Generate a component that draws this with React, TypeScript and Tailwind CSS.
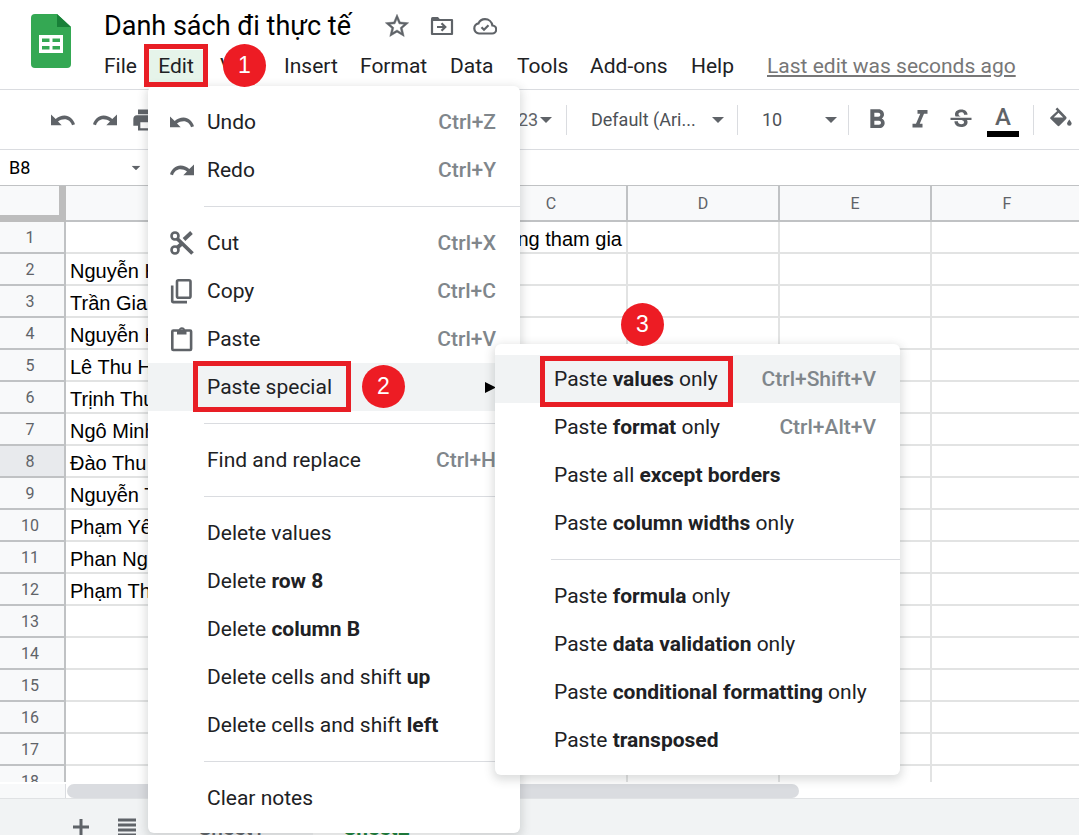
import React from 'react';
import { MdFormatBold, MdFormatItalic, MdPrint, MdStrikethroughS } from 'react-icons/md';

interface MenuEntry {
  text: string;
  bold?: string;
  after?: string;
  shortcut?: string;
  icon?: React.ReactNode;
  highlighted?: boolean;
  hasSubmenu?: boolean;
}

const Undo: React.FC<{ className?: string }> = ({ className = '' }) => (
  <svg viewBox="0 0 24 12" className={`w-6 h-3 fill-[#5f6368] ${className}`} aria-hidden="true">
    <path d="M0 .5v10.800h10.700L7 7.600C9 6 11 5.300 13.600 5.300c3.500 0 6.200 2.200 7.400 5.900l3-1C22.300 5.200 18.500 1.600 13.500 1.600 10.200 1.600 7.200 3 4.700 5.100z" />
  </svg>
);

const Redo = () => <Undo className="-scale-x-100" />;

const StarIcon = () => (
  <svg viewBox="0 0 24 24" className="w-7 h-7 fill-[#5f6368] stroke-[#5f6368]" strokeWidth="0.400" aria-hidden="true">
    <path d="M22 9.240l-7.190-.620L12 2 9.190 8.630 2 9.240l5.460 4.730L5.820 21 12 17.270 18.180 21l-1.630-7.030L22 9.240zM12 15.400l-3.760 2.270 1-4.280-3.320-2.880 4.380-.380L12 6.100l1.710 4.040 4.380.380-3.320 2.880 1 4.280L12 15.400z" />
  </svg>
);

const CutIcon = () => (
  <svg viewBox="0 0 24 24" className="w-6 h-6" fill="none" stroke="#5f6368" strokeWidth="2.600" aria-hidden="true">
    <circle cx="5" cy="5" r="3.500" />
    <circle cx="5" cy="19" r="3.500" />
    <path d="M7 7.500L22.500 22.500M7.500 16.500l5-4.500" strokeWidth="3.800" />
    <path d="M14 8.500L21.500 1.500" strokeWidth="3.800" />
  </svg>
);

const CopyIcon = () => (
  <svg viewBox="0 0 24 26" className="w-6 h-[26px]" fill="none" stroke="#5f6368" strokeWidth="2.600" aria-hidden="true">
    <rect x="7" y="2.200" width="13.500" height="17.600" rx="1.500" />
    <path d="M2.200 7.500v15.800q0 .8.800.8H17" />
  </svg>
);

const PasteIcon = () => (
  <svg viewBox="0 0 24 26" className="w-6 h-[26px]" fill="none" stroke="#5f6368" strokeWidth="2.600" aria-hidden="true">
    <rect x="2.300" y="4.500" width="18.800" height="19.500" rx="1" />
    <path d="M7 4h9.500v4.500H7z" fill="#5f6368" stroke="none" />
    <path d="M9.500 4.500a2.300 2.300 0 0 1 4.600 0" strokeWidth="1.800" />
  </svg>
);

const MoveIcon = () => (
  <svg viewBox="0 0 24 20" className="w-6 h-5" fill="none" stroke="#5f6368" strokeWidth="2.200" aria-hidden="true">
    <path d="M2 4h20v14H2z" strokeLinejoin="round" />
    <path d="M1 4V2.500Q1 1 2.500 1H8l2.500 3z" fill="#5f6368" stroke="none" />
    <path d="M7 11h8M11.500 7.200l3.800 3.800-3.800 3.800" />
  </svg>
);

const CloudIcon = () => (
  <svg viewBox="0 0 24 17" className="w-6 h-[17px]" fill="none" stroke="#5f6368" strokeWidth="2.200" aria-hidden="true">
    <path d="M6 15.500h13a4 4 0 0 0 .4-8C18.800 3.800 15.800 1.200 12 1.200c-2.900 0-5.400 1.700-6.500 4.200A5.100 5.100 0 0 0 6 15.500z" />
    <path d="M8.500 9.200l2.500 2.500 4.500-4.500" />
  </svg>
);

const FillIcon = () => (
  <svg viewBox="0 0 22 22" className="w-[22px] h-[22px] fill-[#5f6368]" aria-hidden="true">
    <path d="M5.500 2.200L7.300.5l8.800 9.300c.6.700.6 1.500 0 2.200l-6.500 6.600c-.7.700-1.500.7-2.200 0L.7 12.100c-.7-.7-.7-1.500 0-2.200l6.500-6zM8.500 5.800L3.700 10.600h9.500z" fillRule="evenodd" />
    <path d="M19.300 12.500s-2.200 2.600-2.200 4.100a2.200 2.200 0 0 0 4.500 0c0-1.500-2.300-4.100-2.300-4.100z" />
  </svg>
);

const PlusIcon = () => (
  <svg viewBox="0 0 16 16" className="w-4 h-4" stroke="#5f6368" strokeWidth="3" aria-hidden="true">
    <path d="M8 0v16M0 8h16" />
  </svg>
);

const ListIcon = () => (
  <svg viewBox="0 0 18 18" className="w-[18px] h-[18px]" stroke="#5f6368" strokeWidth="3" aria-hidden="true">
    <path d="M0 2h18M0 7h18M0 12h18M0 17h18" />
  </svg>
);

const SheetsLogo = () => (
  <svg viewBox="0 0 40 54" className="w-10 h-[54px]" aria-label="Sheets" role="img">
    <path fill="#34a853" d="M4 0h22l14 13v37a4 4 0 0 1-4 4H4a4 4 0 0 1-4-4V4a4 4 0 0 1 4-4z" />
    <path fill="#188038" d="M26 0l14 13H26z" />
    <path fill="#fff" d="M8 21h24v18H8zM11 24.500v3.500h7.500v-3.500zM21.500 24.500v3.500H29v-3.500zM11 32v3.500h7.500V32zM21.500 32v3.500H29V32z" fillRule="evenodd" />
  </svg>
);

const Caret = ({ className = '' }: { className?: string }) => (
  <svg viewBox="0 0 12 6" className={`w-3 h-[6px] fill-[#5f6368] ${className}`} aria-hidden="true">
    <path d="M0 0h12L6 6z" />
  </svg>
);

const Divider = () => <div className="w-px h-[30px] bg-[#dadce0] shrink-0" />;

const editMenu: MenuEntry[][] = [
  [
    { text: 'Undo', shortcut: 'Ctrl+Z', icon: <Undo /> },
    { text: 'Redo', shortcut: 'Ctrl+Y', icon: <Redo /> },
  ],
  [
    { text: 'Cut', shortcut: 'Ctrl+X', icon: <CutIcon /> },
    { text: 'Copy', shortcut: 'Ctrl+C', icon: <CopyIcon /> },
    { text: 'Paste', shortcut: 'Ctrl+V', icon: <PasteIcon /> },
    { text: 'Paste special', highlighted: true, hasSubmenu: true },
  ],
  [{ text: 'Find and replace', shortcut: 'Ctrl+H' }],
  [
    { text: 'Delete values' },
    { text: 'Delete ', bold: 'row 8' },
    { text: 'Delete ', bold: 'column B' },
    { text: 'Delete cells and shift ', bold: 'up' },
    { text: 'Delete cells and shift ', bold: 'left' },
  ],
  [{ text: 'Clear notes' }],
];

const pasteMenu: MenuEntry[][] = [
  [
    { text: 'Paste ', bold: 'values', after: ' only', shortcut: 'Ctrl+Shift+V', highlighted: true },
    { text: 'Paste ', bold: 'format', after: ' only', shortcut: 'Ctrl+Alt+V' },
    { text: 'Paste all ', bold: 'except borders' },
    { text: 'Paste ', bold: 'column widths', after: ' only' },
  ],
  [
    { text: 'Paste ', bold: 'formula', after: ' only' },
    { text: 'Paste ', bold: 'data validation', after: ' only' },
    { text: 'Paste ', bold: 'conditional formatting', after: ' only' },
    { text: 'Paste ', bold: 'transposed' },
  ],
];

const Menu: React.FC<{ groups: MenuEntry[][]; label: string; className: string }> = ({
  groups,
  label,
  className,
}) => (
  <div
    role="menu"
    aria-label={label}
    className={`absolute bg-white rounded-md shadow-[0_3px_10px_2px_rgba(60,64,67,0.18)] ${className}`}
  >
    {groups.map((group, index) => (
      <div key={index}>
        {index > 0 && <div className="my-3 ml-14 h-px bg-[#dadce0]" />}
        {group.map(entry => (
          <button
            key={entry.text + (entry.bold ?? '')}
            role="menuitem"
            className={`flex items-center w-full h-12 pr-6 text-left text-[21px] leading-7 whitespace-nowrap ${
              entry.highlighted ? 'bg-[#f1f3f4]' : ''
            }`}
          >
            <span className="w-[59px] pl-2 shrink-0 flex justify-center">{entry.icon}</span>
            <span className="flex-1 whitespace-pre">
              {entry.text}
              {entry.bold && <b className="font-bold">{entry.bold}</b>}
              {entry.after}
            </span>
            {entry.shortcut && <span className="font-medium text-[#80868b]">{entry.shortcut}</span>}
            {entry.hasSubmenu && (
              <svg viewBox="0 0 11 11" className="w-[11px] h-[11px]" aria-hidden="true">
                <path d="M0 0l11 5.500L0 11z" />
              </svg>
            )}
          </button>
        ))}
      </div>
    ))}
  </div>
);

const columns = ['A', 'B', 'C', 'D', 'E', 'F'];

const names: Record<number, string> = {
  2: 'Nguyễn H',
  3: 'Trần Gia',
  4: 'Nguyễn H',
  5: 'Lê Thu H',
  6: 'Trịnh Thu',
  7: 'Ngô Minh',
  8: 'Đào Thu',
  9: 'Nguyễn T',
  10: 'Phạm Yến',
  11: 'Phan Ngọc',
  12: 'Phạm Thu',
};

const Sheet = () => (
  <table className="table-fixed border-separate border-spacing-0 w-[1084px]">
    <colgroup>
      <col className="w-[66px]" />
      <col className="w-[258px]" />
      {columns.slice(1).map(column => (
        <col key={column} className="w-[152px]" />
      ))}
    </colgroup>
    <thead>
      <tr className="h-9 bg-[#f8f9fa] text-base text-[#5f6368]">
        <td className="border-r-[7px] border-b-[7px] border-[#bdbdbd]" />
        {columns.map(column => (
          <th key={column} scope="col" className="p-0 pt-[2px] font-normal border-r-2 border-b-2 border-[#c0c2c4]">
            {column}
          </th>
        ))}
      </tr>
    </thead>
    <tbody>
      {Array.from({ length: 18 }, (_, index) => index + 1).map(row => (
        <tr key={row} className="h-8">
          <th
            scope="row"
            className={`p-0 pt-[2px] pr-1 text-base leading-6 font-normal text-[#5f6368] border-r-2 border-b-2 border-[#c0c2c4] ${
              row === 8 ? 'bg-[#e8eaed]' : 'bg-[#f8f9fa]'
            }`}
          >
            {row}
          </th>
          {columns.map(column => (
            <td
              key={column}
              className="p-0 pt-1 px-1 border-r-2 border-b-2 border-[#e2e3e3] font-['Liberation_Sans',Arial,sans-serif] text-xl leading-6 text-black whitespace-nowrap overflow-hidden"
            >
              {column === 'A' && names[row]}
              {column === 'C' && row === 1 && <div className="text-right">ng tham gia</div>}
            </td>
          ))}
        </tr>
      ))}
    </tbody>
  </table>
);

const Step: React.FC<{ number: number; className: string }> = ({ number, className }) => (
  <div
    className={`absolute w-[43px] h-[43px] rounded-full bg-[#ed1c24] text-white text-[23px] flex items-center justify-center font-['Liberation_Sans',Arial,sans-serif] ${className}`}
  >
    {number}
  </div>
);

const App: React.FC = () => (
  <div className="relative h-screen flex flex-col overflow-hidden bg-white text-[#202124] font-[Roboto,sans-serif]">
    {/* Title and menu bar */}
    <header className="h-[90px] shrink-0 flex pl-[31px] border-b border-[#dadce0]">
      <div className="pt-[14px] w-[73px] shrink-0">
        <SheetsLogo />
      </div>
      <div className="flex-1 min-w-0">
        <div className="flex items-center h-[52px]">
          <h1 className="text-[27px] leading-8 text-black whitespace-nowrap">Danh sách đi thực tế</h1>
          <div className="flex items-center gap-[19px] ml-8 text-[#5f6368]">
            <button aria-label="Star"><StarIcon /></button>
            <button aria-label="Move"><MoveIcon /></button>
            <button aria-label="Document status"><CloudIcon /></button>
          </div>
        </div>
        <nav className="flex items-center h-7 text-[21px] leading-7 whitespace-nowrap">
          <button className="w-[40px] text-left">File</button>
          <button className="w-[56px] h-8 ml-1 bg-[#e6f4ea]">Edit</button>
          <button className="w-[64px] ml-4 text-left">View</button>
          <button className="w-[76px] text-left">Insert</button>
          <button className="w-[90px] text-left">Format</button>
          <button className="w-[67px] text-left">Data</button>
          <button className="w-[73px] text-left">Tools</button>
          <button className="w-[101px] text-left">Add-ons</button>
          <button className="w-[76px] text-left">Help</button>
          <a href="#history" className="text-[#777] underline">Last edit was seconds ago</a>
        </nav>
      </div>
    </header>

    {/* Toolbar */}
    <div className="h-[60px] shrink-0 flex items-center border-b border-[#dadce0] text-[#5f6368] whitespace-nowrap">
      <div className="flex items-center w-[518px] shrink-0 gap-[18px] pl-[51px]">
        <button aria-label="Undo"><Undo /></button>
        <button aria-label="Redo"><Redo /></button>
        <button aria-label="Print" className="-ml-1"><MdPrint size={28} /></button>
      </div>
      <button className="flex items-center w-12 gap-[2px] text-lg">
        23
        <Caret />
      </button>
      <Divider />
      <button className="flex items-center justify-between w-[170px] pl-6 pr-[13px] text-lg text-[#4d5156]">
        Default (Ari...
        <Caret />
      </button>
      <Divider />
      <button className="flex items-center justify-between w-[110px] pl-6 pr-[11px] text-lg text-[#4d5156]">
        10
        <Caret />
      </button>
      <Divider />
      <div className="flex items-center gap-3 pl-3 w-[184px] shrink-0">
        <button aria-label="Bold"><MdFormatBold size={32} /></button>
        <button aria-label="Italic"><MdFormatItalic size={30} /></button>
        <button aria-label="Strikethrough"><MdStrikethroughS size={28} /></button>
        <button aria-label="Text color" className="w-8 border-b-[6px] border-black text-2xl leading-7 font-medium">
          A
        </button>
      </div>
      <Divider />
      <button aria-label="Fill color" className="ml-4 pb-1"><FillIcon /></button>
    </div>

    {/* Name box */}
    <div className="h-9 shrink-0 flex items-center border-b border-[#c0c2c4]">
      <input aria-label="Name box" defaultValue="B8" className="w-[130px] pl-[9px] text-lg text-black outline-none" />
      <Caret className="scale-75" />
    </div>

    {/* Grid */}
    <div className="flex-1 min-h-0 overflow-hidden">
      <Sheet />
    </div>

    <div className="h-[17px] shrink-0 flex pt-[2px] border-b border-[#e0e2e4]">
      <div className="w-[66px] border-r border-[#dadce0] bg-[#f8f9fa] shrink-0" />
      <div className="w-[732px] h-[14px] ml-px rounded-full bg-[#dadce0]" />
    </div>

    {/* Sheet tabs, running past the bottom edge */}
    <footer className="h-9 shrink-0 bg-[#f1f3f4] overflow-hidden">
      <div className="flex items-center h-14 text-[21px] font-medium text-[#5f6368]">
        <button aria-label="Add sheet" className="ml-[73px]"><PlusIcon /></button>
        <button aria-label="All sheets" className="ml-[29px]"><ListIcon /></button>
        <button className="ml-[30px] w-[147px] h-full pt-1 pr-4">Sheet1</button>
        <button className="w-[147px] h-full pt-1 pr-5 bg-white font-bold text-[#188038]">Sheet2</button>
      </div>
    </footer>

    <Menu groups={editMenu} label="Edit" className="top-[86px] left-[148px] w-[372px] pt-3 pb-[11px]" />
    <Menu groups={pasteMenu} label="Paste special" className="top-[344px] left-[495px] w-[405px] py-[11px]" />

    {/* Step markers */}
    <div className="absolute top-[44px] left-[144px] w-16 h-[43px] border-[5px] border-[#e81e25]" />
    <div className="absolute top-[361px] left-[193px] w-[158px] h-[51px] border-[5px] border-[#e81e25]" />
    <div className="absolute top-[356px] left-[540px] w-[193px] h-[51px] border-[5px] border-[#e81e25]" />
    <Step number={1} className="top-[44px] left-[223px]" />
    <Step number={2} className="top-[365px] left-[362px]" />
    <Step number={3} className="top-[303px] left-[621px]" />
  </div>
);

export default App;
